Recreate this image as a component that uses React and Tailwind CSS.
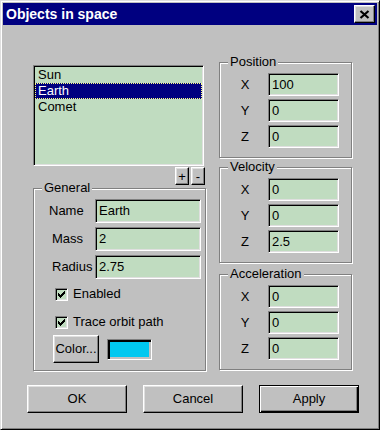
import React from 'react';

const sunken =
  'border border-t-[#808080] border-l-[#808080] border-b-white border-r-white shadow-[inset_1px_1px_0_#000,inset_-1px_-1px_0_#dfdfdf]';
const raised =
  'border border-t-white border-l-white border-b-black border-r-black shadow-[inset_-1px_-1px_0_#808080,inset_1px_1px_0_#dfdfdf]';

function Field({ value, className }) {
  return (
    <div className={`${sunken} bg-[#c0dcc0] flex items-center pl-[3px] whitespace-nowrap ${className}`}>
      {value}
    </div>
  );
}

function GroupBox({ label, className, children }) {
  return (
    <div className={`relative border border-[#808080] shadow-[inset_1px_1px_0_#fff,1px_1px_0_#fff] ${className}`}>
      <span className="absolute -top-[9px] left-[8px] px-[2px] bg-[#c0c0c0] leading-[16px]">{label}</span>
      {children}
    </div>
  );
}

function Check() {
  const cols = [
    [1, 3],
    [2, 4],
    [3, 5],
    [4, 4],
    [5, 3],
    [6, 2],
    [7, 1],
  ];
  return (
    <svg width="9" height="9" viewBox="0 0 9 9" shapeRendering="crispEdges">
      {cols.map(([x, y]) => (
        <rect key={x} x={x} y={y} width="1" height="3" fill="#000" />
      ))}
    </svg>
  );
}

function CheckRow({ label, className }) {
  return (
    <div className={`flex items-center h-[20px] pl-[21px] gap-[5px] ${className}`}>
      <div className={`${sunken} w-[13px] h-[13px] bg-[#c0dcc0] flex items-center justify-center`}>
        <Check />
      </div>
      <span>{label}</span>
    </div>
  );
}

function VectorBox({ label, values, className }) {
  return (
    <GroupBox label={label} className={`pt-[10px] pb-[9px] ${className}`}>
      <div className="flex flex-col gap-[3px]">
        {['X', 'Y', 'Z'].map((axis, i) => (
          <div key={axis} className="flex items-center pl-[6px] gap-[4px]">
            <span className="w-[38px] text-center">{axis}</span>
            <Field value={values[i]} className="w-[71px] h-[23px]" />
          </div>
        ))}
      </div>
    </GroupBox>
  );
}

export default function App() {
  const objects = ['Sun', 'Earth', 'Comet'];
  const selected = 'Earth';

  return (
    <div className="w-[380px] h-[430px] flex flex-col p-[2px] bg-[#c0c0c0] border border-t-[#dfdfdf] border-l-[#dfdfdf] border-r-black border-b-black shadow-[inset_1px_1px_0_#fff,inset_-1px_-1px_0_#808080] font-['Liberation_Sans',Arial,sans-serif] text-[13px] text-black">
      {/* title bar */}
      <div className="h-[22px] bg-[#000080] flex items-center justify-between pl-[3px]">
        <span className="text-white font-bold text-[14px]">Objects in space</span>
        <div className={`${raised} bg-[#c0c0c0] w-[21px] h-[18px] mr-[2px] flex items-center justify-center`}>
          <svg width="11" height="9" viewBox="0 0 11 9">
            <path d="M1.5 1 L9.5 8 M9.5 1 L1.5 8" stroke="#000" strokeWidth="2.2" />
          </svg>
        </div>
      </div>

      <div className="flex pl-[30px]">
        {/* left column */}
        <div className="w-[173px] pt-[40px] flex flex-col">
          <div className={`${sunken} w-[171px] h-[101px] bg-[#c0dcc0] p-[1px]`}>
            {objects.map((name) => (
              <div
                key={name}
                className={
                  name === selected
                    ? 'h-[16px] leading-[14px] pl-[2px] bg-[#000080] text-white border border-dotted border-[#ffff80]'
                    : 'h-[16px] leading-[16px] pl-[3px]'
                }
              >
                {name}
              </div>
            ))}
          </div>
          <div className="flex justify-end gap-[2px] pr-[1px] mt-[1px]">
            <div className={`${raised} w-[14px] h-[18px] bg-[#c0c0c0] flex items-center justify-center leading-none`}>+</div>
            <div className={`${raised} w-[14px] h-[18px] bg-[#c0c0c0] flex items-center justify-center leading-none`}>-</div>
          </div>

          <GroupBox label="General" className="mt-[3px] h-[183px] pt-[10px]">
            <div className="flex flex-col gap-[4px]">
              {[
                ['Name', 'Earth', 'pl-[15px]'],
                ['Mass', '2', 'pl-[18px]'],
                ['Radius', '2.75', 'pl-[18px]'],
              ].map(([label, value, pad]) => (
                <div key={label} className="flex items-center">
                  <span className={`w-[61px] whitespace-nowrap ${pad}`}>{label}</span>
                  <Field value={value} className="w-[106px] h-[24px]" />
                </div>
              ))}
            </div>
            <CheckRow label="Enabled" className="mt-[5px]" />
            <CheckRow label="Trace orbit path" className="mt-[8px]" />
            <div className="flex items-center pl-[19px] gap-[8px] mt-[3px]">
              <div className={`${raised} w-[46px] h-[28px] bg-[#c0c0c0] flex items-center justify-center whitespace-nowrap`}>
                Color...
              </div>
              <div className="w-[45px] h-[21px] border border-t-[#808080] border-l-[#808080] border-b-white border-r-white shadow-[inset_2px_2px_0_#000,inset_-2px_-2px_0_#c0c0c0] bg-[#00c8f0]" />
            </div>
          </GroupBox>
        </div>

        {/* right column */}
        <div className="w-[133px] ml-[13px] pt-[37px] flex flex-col">
          <VectorBox label="Position" values={['100', '0', '0']} />
          <VectorBox label="Velocity" values={['0', '0', '2.5']} className="mt-[9px]" />
          <VectorBox label="Acceleration" values={['0', '0', '0']} className="mt-[11px]" />
        </div>
      </div>

      {/* dialog buttons */}
      <div className="flex pl-[24px] gap-[16px] mt-[14px]">
        <div className={`${raised} w-[100px] h-[28px] bg-[#c0c0c0] flex items-center justify-center`}>OK</div>
        <div className={`${raised} w-[100px] h-[28px] bg-[#c0c0c0] flex items-center justify-center`}>Cancel</div>
        <div className="w-[100px] h-[28px] bg-[#c0c0c0] border border-black shadow-[inset_1px_1px_0_#fff,inset_-1px_-1px_0_#000,inset_-2px_-2px_0_#808080] flex items-center justify-center">
          Apply
        </div>
      </div>
    </div>
  );
}
